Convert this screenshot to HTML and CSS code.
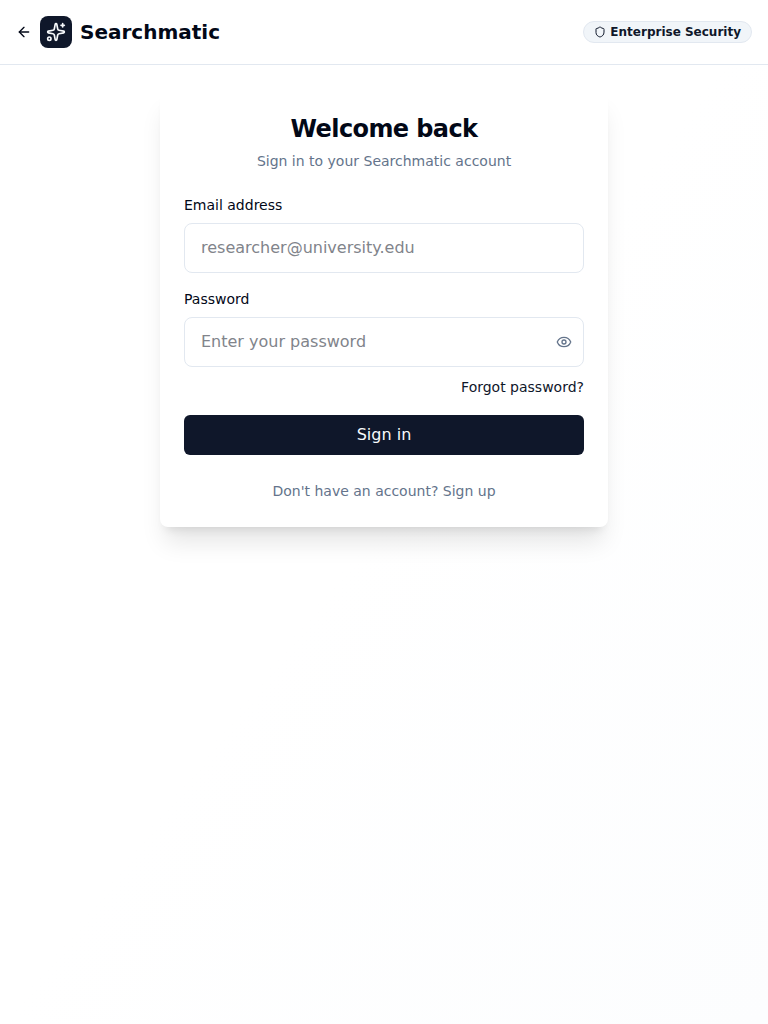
FILE: index.html
```html
<!DOCTYPE html>
<html lang="en">
<head>
<meta charset="utf-8">
<title>Searchmatic</title>
<link rel="stylesheet" href="styles.css">
</head>
<body>
<div class="page">
<header class="header">
  <div class="brand">
    <a class="back" href="#" aria-label="Back"><svg class="icon" width="16" height="16" viewBox="0 0 24 24"><path d="m12 19-7-7 7-7"/><path d="M19 12H5"/></svg></a>
    <span class="logo"><svg class="icon" width="20" height="20" viewBox="0 0 24 24"><path d="M11.017 2.814a1 1 0 0 1 1.966 0l1.051 5.558a2 2 0 0 0 1.594 1.594l5.558 1.051a1 1 0 0 1 0 1.966l-5.558 1.051a2 2 0 0 0-1.594 1.594l-1.051 5.558a1 1 0 0 1-1.966 0l-1.051-5.558a2 2 0 0 0-1.594-1.594l-5.558-1.051a1 1 0 0 1 0-1.966l5.558-1.051a2 2 0 0 0 1.594-1.594z"/><path d="M20 2v4"/><path d="M22 4h-4"/><circle cx="4" cy="20" r="2"/></svg></span>
    <span class="name">Searchmatic</span>
  </div>
  <div class="badge"><svg class="icon" width="12" height="12" viewBox="0 0 24 24"><path d="M20 13c0 5-3.5 7.5-7.66 8.95a1 1 0 0 1-.67-.01C7.5 20.5 4 18 4 13V6a1 1 0 0 1 1-1c2 0 4.500-1.200 6.240-2.720a1.170 1.170 0 0 1 1.520 0C14.510 3.810 17 5 19 5a1 1 0 0 1 1 1z"/></svg>Enterprise Security</div>
</header>
<main class="main">
  <section class="card">
    <h1 class="title">Welcome back</h1>
    <p class="subtitle">Sign in to your Searchmatic account</p>
    <form class="form">
      <div class="field">
        <label class="label" for="email">Email address</label>
        <input class="input" id="email" type="email" placeholder="researcher@university.edu">
      </div>
      <div class="field">
        <label class="label" for="password">Password</label>
        <div class="password">
          <input class="input" id="password" type="password" placeholder="Enter your password">
          <button class="reveal" type="button" aria-label="Show password"><svg class="icon" width="16" height="16" viewBox="0 0 24 24"><path d="M2.062 12.348a1 1 0 0 1 0-.696 10.750 10.750 0 0 1 19.876 0 1 1 0 0 1 0 .696 10.750 10.750 0 0 1-19.876 0"/><circle cx="12" cy="12" r="3"/></svg></button>
        </div>
      </div>
      <a class="forgot" href="#">Forgot password?</a>
      <button class="submit" type="button">Sign in</button>
    </form>
    <a class="signup" href="#">Don't have an account? Sign up</a>
  </section>
</main>
</div>
</body>
</html>
```
FILE: styles.css
```css
* { box-sizing: border-box; margin: 0; }
body { font-family: "DejaVu Sans", sans-serif; font-size: 14px; line-height: 20px; color: #020817; }
a { color: inherit; text-decoration: none; }
button { font: inherit; border: 0; background: none; padding: 0; }
.icon { display: block; fill: none; stroke: currentColor; stroke-width: 2; stroke-linecap: round; stroke-linejoin: round; }
.page { min-height: 1024px; background: linear-gradient(to bottom right, #fff, #fff 50%, #fcfdfe); }
.header { height: 65px; padding: 0 16px; display: flex; align-items: center; justify-content: space-between; background: #fff; border-bottom: 1px solid #e2e8f0; }
.brand { display: flex; align-items: center; gap: 8px; }
.logo { width: 32px; height: 32px; border-radius: 8px; background: #0f172a; color: #f8fafc; display: grid; place-items: center; }
.name { font-size: 20px; line-height: 28px; font-weight: 700; }
.badge { display: flex; align-items: center; gap: 4px; height: 22px; padding: 0 10px; border: 1px solid #e2e8f0; border-radius: 11px; background: #f1f5f9; color: #0f172a; font-size: 12px; line-height: 16px; font-weight: 700; }
.main { display: flex; justify-content: center; padding-top: 24px; }
.card { width: 448px; height: 438px; padding: 24px; border-radius: 8px; background: #fff; box-shadow: 0 20px 25px -5px rgb(0 0 0 / .1), 0 8px 10px -6px rgb(0 0 0 / .1); display: flex; flex-direction: column; align-items: stretch; }
.title { font-size: 24px; line-height: 32px; font-weight: 700; letter-spacing: -.6px; text-align: center; }
.subtitle { margin-top: 6px; text-align: center; color: #64748b; }
.form { display: flex; flex-direction: column; margin-top: 24px; }
.field { display: flex; flex-direction: column; gap: 8px; margin-bottom: 16px; }
.input { width: 100%; height: 50px; padding: 0 16px 2px; border: 1px solid #e2e8f0; border-radius: 8px; background: #fff; font: 16px/24px "DejaVu Sans", sans-serif; color: #020817; }
.input::placeholder { color: #81848b; }
.password { position: relative; }
.reveal { position: absolute; right: 12px; top: 17px; color: #64748b; }
.forgot { align-self: flex-end; margin-top: -6px; color: #0f172a; }
.submit { height: 40px; margin-top: 18px; border-radius: 6px; background: #0f172a; color: #f8fafc; font-size: 16px; line-height: 24px; }
.signup { margin-top: 26px; text-align: center; color: #64748b; }
```
